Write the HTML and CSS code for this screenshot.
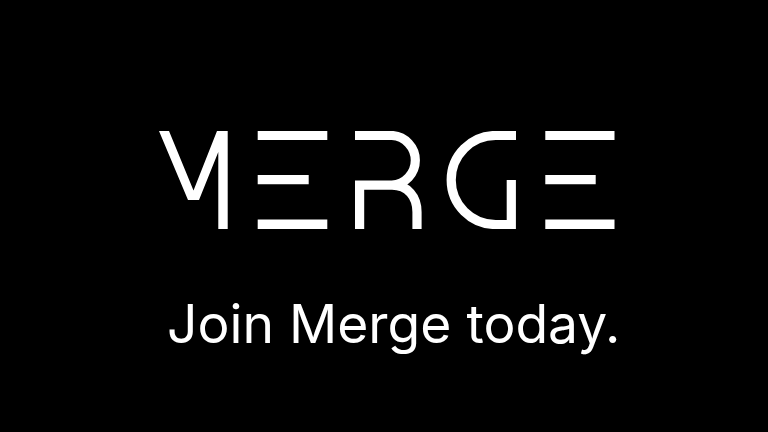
FILE: index.html
```html
<!DOCTYPE html>
<html lang="en">
<head>
<meta charset="utf-8">
<title>Merge</title>
<link rel="stylesheet" href="styles.css">
</head>
<body>
<main class="hero">
  <svg class="logo" viewBox="159 131 456 98" role="img" aria-label="Merge">
    <polygon class="fill" points="159,131 169,131 193.5,190.5 217,131 227.7,131 227.7,229 218.3,229 218.3,152 199,200 188,200"/>
    <path class="fill" d="M257.7 131H327.3V140H257.7ZM257.7 175H308.7V184.3H257.7ZM257.7 219.5H327.3V229H257.7Z"/>
    <path class="line" d="M355 135.5H392A24.9 24.9 0 0 1 392 185.2H359.6V229M392 185.2C408 185.2 417 197 417 212V229"/>
    <path class="line" d="M516 135.5H495.7A44.5 44.5 0 0 0 495.7 224.5H511.3V180"/>
    <path class="fill" d="M545.3 131H614.5V140H545.3ZM545.3 175H595.7V184.3H545.3ZM545.3 219.5H614.5V229H545.3Z"/>
  </svg>
  <p class="tagline">Join Merge today.</p>
</main>
</body>
</html>
```
FILE: styles.css
```css
html, body {
  margin: 0;
  height: 100%;
  background: #000;
}
body {
  overflow: hidden;
}
.hero {
  display: flex;
  flex-direction: column;
  align-items: flex-start;
  padding: 131px 0 0 159px;
}
.logo {
  display: block;
  width: 456px;
  height: 98px;
}
.fill {
  fill: #fff;
}
.line {
  fill: none;
  stroke: #fff;
  stroke-width: 9.2;
}
.tagline {
  margin: 63px 0 0 8px;
  color: #fff;
  font-family: Inter, "Liberation Sans", sans-serif;
  font-size: 53.4px;
  font-weight: 400;
  line-height: 64px;
  white-space: nowrap;
}
```
